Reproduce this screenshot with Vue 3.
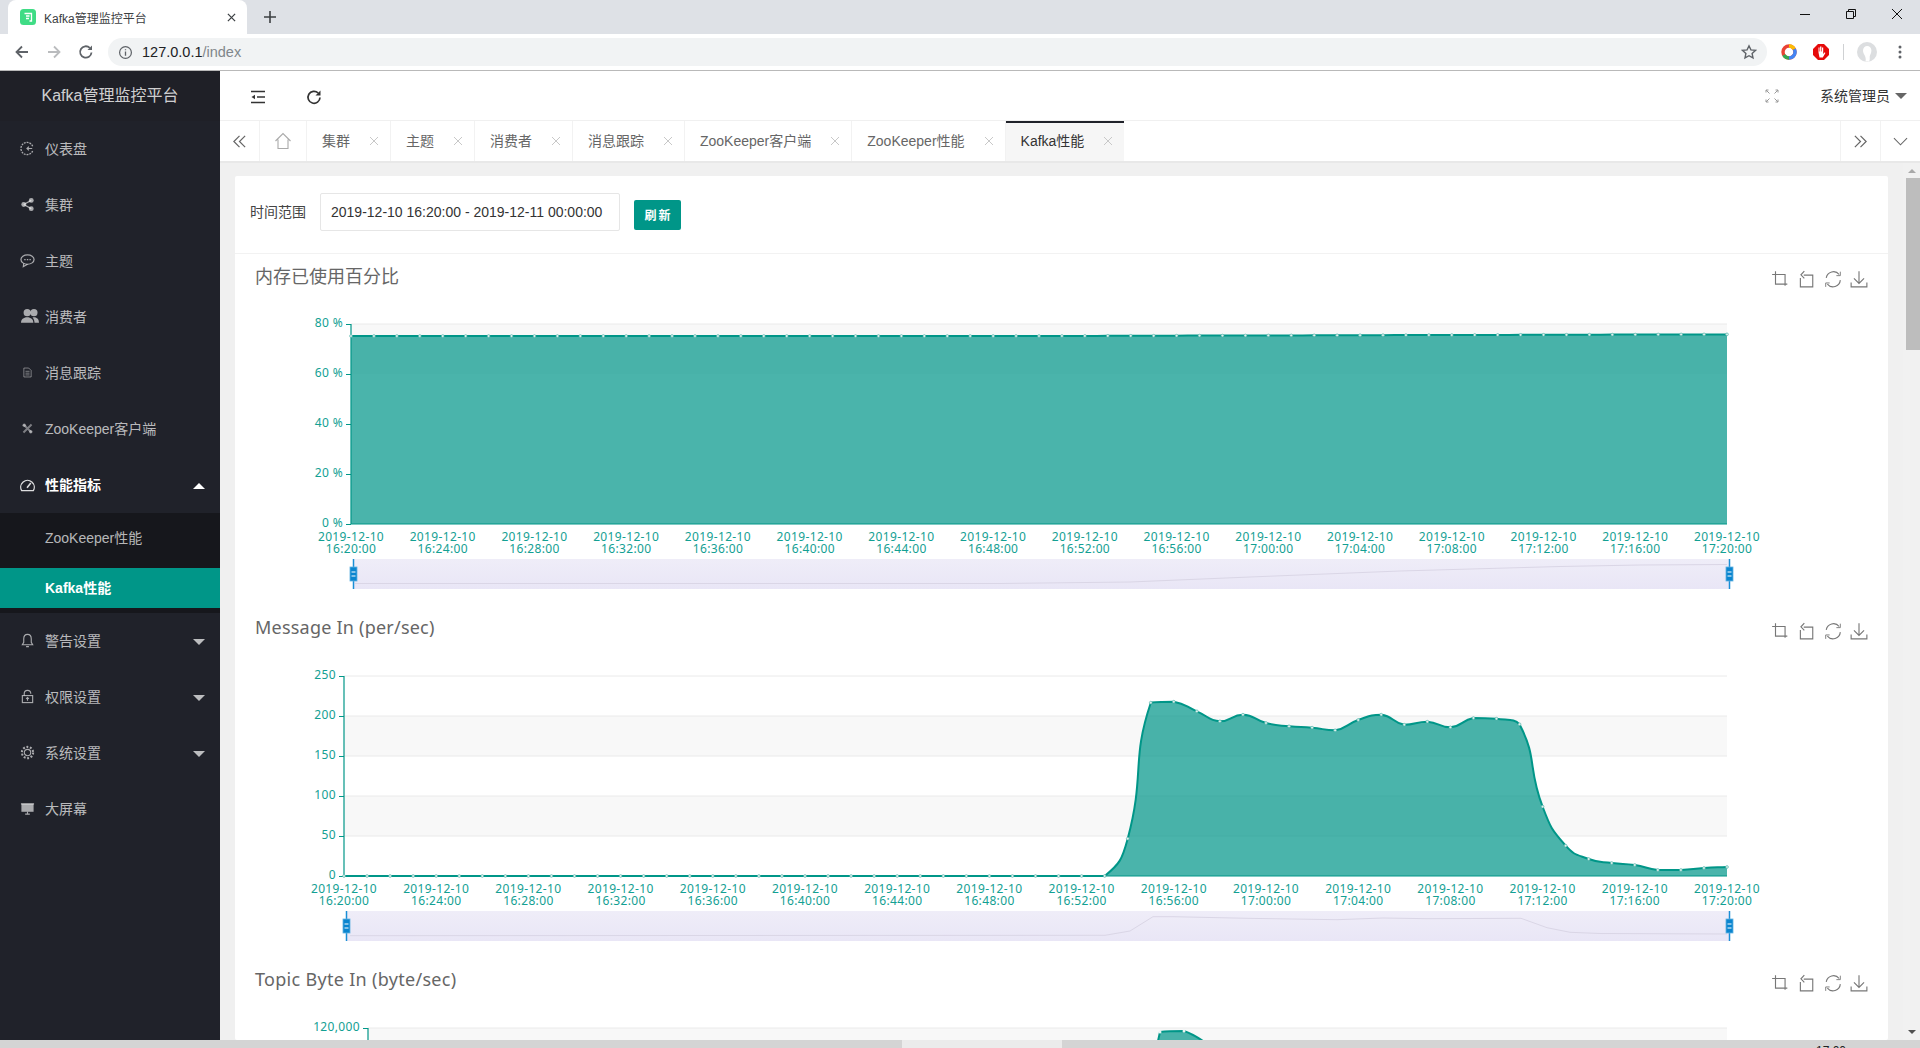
<script setup>
const menu = [
  { label: '仪表盘', icon: '<path d="M13.5 5.5A6.5 6.5 0 1 0 13.5 10.5" fill="none" stroke="currentColor" stroke-width="1.4" stroke-dasharray="2 1"/><path d="M13 8H7.5M9.5 6L7.5 8l2 2" fill="none" stroke="currentColor" stroke-width="1.3"/>' },
  { label: '集群', icon: '<circle cx="4" cy="8" r="2.6" fill="currentColor"/><circle cx="12" cy="3.6" r="2.6" fill="currentColor"/><circle cx="12" cy="12.4" r="2.6" fill="currentColor"/><path d="M4 8l8-4.4M4 8l8 4.4" stroke="currentColor" stroke-width="1.3"/>' },
  { label: '主题', icon: '<ellipse cx="8" cy="7" rx="7" ry="5" fill="none" stroke="currentColor" stroke-width="1.3"/><path d="M4 11l-.5 3.500L8 12" fill="none" stroke="currentColor" stroke-width="1.200"/><path d="M4.500 7h7" stroke="currentColor" stroke-width="1.400" stroke-dasharray="1.500 1.300"/>' },
  { label: '消费者', icon: '<circle cx="5.500" cy="5" r="3.200" fill="currentColor"/><circle cx="11.500" cy="5" r="3.200" fill="currentColor"/><path d="M0 14c0-3 2.200-5 5.500-5S11 11 11 14zM12 14c0-2-.7-3.700-1.800-4.700.4-.2.900-.3 1.400-.3 2.800 0 4.400 2 4.400 5z" fill="currentColor"/>', big: true },
  { label: '消息跟踪', icon: '<path d="M3.500 2.500h6l3 3v8h-9zM5.500 6.500h5M5.500 8.800h5M5.500 11h5" fill="none" stroke="currentColor" stroke-width="1.200"/>', dim: true },
  { label: 'ZooKeeper客户端', icon: '<path d="M3 3l10 10M13 3L3 13" stroke="currentColor" stroke-width="2.400"/><circle cx="4" cy="4" r="2.200" fill="currentColor"/><circle cx="12" cy="12" r="2.200" fill="currentColor"/>', dim: true },
  { label: '性能指标', active: true, open: true, icon: '<path d="M1.800 14.500A7.200 7.200 0 1 1 14.200 14.500z" fill="none" stroke="currentColor" stroke-width="1.400"/><path d="M7.500 11.500L11.500 6.500" stroke="currentColor" stroke-width="1.700"/>', arrow: 'up' },
  { label: '警告设置', icon: '<path d="M8 1.500c-2.800 0-4 2.200-4 4.500v4L2.500 12.500h11L12 10V6c0-2.300-1.200-4.500-4-4.500zM6.500 14.500h3" fill="none" stroke="currentColor" stroke-width="1.200"/>', arrow: 'down' },
  { label: '权限设置', icon: '<rect x="2.500" y="7" width="11" height="7.500" fill="none" stroke="currentColor" stroke-width="1.200"/><path d="M4.500 7V5a3.500 3.500 0 0 1 7 0M8 9v3.500M6.500 10.500L8 9l1.500 1.500" fill="none" stroke="currentColor" stroke-width="1.200"/>', arrow: 'down' },
  { label: '系统设置', icon: '<circle cx="8" cy="8" r="3.400" fill="none" stroke="currentColor" stroke-width="1.200"/><circle cx="8" cy="8" r="6" fill="none" stroke="currentColor" stroke-width="2.200" stroke-dasharray="2 1.770"/>', arrow: 'down' },
  { label: '大屏幕', icon: '<rect x="1.500" y="3" width="13" height="8.500" fill="currentColor"/><path d="M1 3h14M8 11.500v2.500M5.500 14h5" stroke="currentColor" stroke-width="1.200"/>' },
]
const subItems = [
  { label: 'ZooKeeper性能' },
  { label: 'Kafka性能', active: true },
]
const tabs = [
  { label: '集群' }, { label: '主题' }, { label: '消费者' }, { label: '消息跟踪' },
  { label: 'ZooKeeper客户端' }, { label: 'ZooKeeper性能' }, { label: 'Kafka性能', active: true },
]

const clamp = (v, a, b) => Math.min(Math.max(v, Math.min(a, b)), Math.max(a, b))

function smooth(pts) {
  let d = `M${pts[0][0]} ${pts[0][1]}`
  const cp = (i) => {
    const p = pts[i], a = pts[Math.max(i - 1, 0)], b = pts[Math.min(i + 1, pts.length - 1)]
    const d0 = Math.hypot(p[0] - a[0], p[1] - a[1]), d1 = Math.hypot(b[0] - p[0], b[1] - p[1])
    const r = d0 + d1 ? d0 / (d0 + d1) : 0.5
    const vx = (b[0] - a[0]) * 0.5, vy = (b[1] - a[1]) * 0.5
    return [[p[0] - vx * r, p[1] - vy * r], [p[0] + vx * (1 - r), p[1] + vy * (1 - r)]]
  }
  for (let i = 1; i < pts.length; i++) {
    const c1 = cp(i - 1)[1], c2 = cp(i)[0], p = pts[i], q = pts[i - 1]
    const y1 = clamp(c1[1], q[1], p[1]), y2 = clamp(c2[1], q[1], p[1])
    d += `C${c1[0].toFixed(1)} ${y1.toFixed(1)} ${c2[0].toFixed(1)} ${y2.toFixed(1)} ${p[0].toFixed(1)} ${p[1].toFixed(1)}`
  }
  return d
}

const times = ['16:20:00','16:24:00','16:28:00','16:32:00','16:36:00','16:40:00','16:44:00','16:48:00','16:52:00','16:56:00','17:00:00','17:04:00','17:08:00','17:12:00','17:16:00','17:20:00']

function series(x0, x1, ys) {
  const step = (x1 - x0) / 60
  return ys.map((y, i) => [x0 + step * i, y])
}

const ys1 = Array.from({ length: 61 }, (_, i) => (i < 30 ? 336 : 336 - (i - 30) * 0.055))
const ys2 = [
  ...Array(34).fill(876),
  838.7, 702.7, 701.7, 711.3, 721.3, 714.7, 723, 726.3, 727.7, 730.3, 720, 714.7, 724.7, 721.7, 727.3, 718, 718.7, 724.3,
  806.7, 845.7, 859, 863, 865, 870, 870, 868, 867,
]
const pts1 = series(351, 1727, ys1)
const pts2 = series(344, 1727, ys2)
const line1 = smooth(pts1)
const line2 = smooth(pts2)

const toPoints = (a) => a.map((p) => p.join(',')).join(' ')
const charts = [
  {
    title: '内存已使用百分比', viewBox: '235 300 1653 306', cls: 'sec1',
    x0: 351, x1: 1727, top: 324, bottom: 524,
    bands: [[324, 50]],
    grid: [324],
    yLabels: [[80, ' %'], [60, ' %'], [40, ' %'], [20, ' %'], [0, ' %']].map((v, i) => ({ t: v[0] + v[1], y: 324 + i * 50 })),
    line: line1, area: line1 + 'L1727 524L351 524Z', pts: pts1,
    lab1: 541, lab2: 553,
    dz: { y: 559, h: 30, x0: 353, x1: 1729, hy: 574 },
    mini: toPoints([[355, 583.5], [1000, 583.5], [1130, 582], [1250, 577], [1400, 571], [1560, 566.5], [1640, 565], [1727, 564.5]]),
  },
  {
    title: 'Message In (per/sec)', viewBox: '235 652 1653 305', cls: 'sec2',
    x0: 344, x1: 1727, top: 676, bottom: 876,
    bands: [[716, 40], [796, 40]],
    grid: [676, 716, 756, 796, 836],
    yLabels: ['250', '200', '150', '100', '50', '0'].map((t, i) => ({ t, y: 676 + i * 40 })),
    line: line2, area: line2 + 'L1727 876L344 876Z', pts: pts2,
    lab1: 893, lab2: 905,
    dz: { y: 911, h: 30, x0: 346, x1: 1729, hy: 926 },
    mini: toPoints([[350, 935.7], [1105, 935.3], [1130, 931], [1153, 916.7], [1173, 916.7], [1247, 918.3], [1337, 919.7], [1383, 918], [1427, 918.7], [1521, 918.3], [1547, 927.7], [1570, 932.3], [1600, 933.5], [1727, 934]]),
  },
]
const chart3Title = 'Topic Byte In (byte/sec)'
const toolIcons = [
  '<path d="M4 1v11.500h10.500M1 4h11.500v10" fill="none" stroke="currentColor"/>',
  '<path d="M6 4.500h8V15H3V7" fill="none" stroke="currentColor"/><path d="M6.500 1L3.500 4.300l3 3.200" fill="none" stroke="currentColor"/>',
  '<path d="M2 7a6.500 6.500 0 0 1 11.500-3M14.500 9a6.500 6.500 0 0 1-11.500 3.500" fill="none" stroke="currentColor"/><path d="M14.500 1.500v3.500H11M1.500 15v-3.500H5" fill="none" stroke="currentColor" stroke-width=".8"/>',
  '<path d="M8 1v10.500M3.500 7.500L8 12l4.500-4.500M1 11v4h14v-4" fill="none" stroke="currentColor"/>',
]
</script>

<template>
  <div class="page">
    <div class="strip">
      <div class="ctab">
        <svg class="favicon" viewBox="0 0 16 16"><rect width="16" height="16" rx="3.500" fill="#3fdc85"/><path d="M4.500 4.500h7v7.500h-2M6 7h3.500M6 9.500h3" fill="none" stroke="#fff" stroke-width="1.300"/></svg>
        <span class="ctitle">Kafka管理监控平台</span>
        <svg class="cx" viewBox="0 0 10 10"><path d="M1 1l8 8M9 1l-8 8" stroke="#3c4043" stroke-width="1.400"/></svg>
      </div>
      <svg class="cplus" viewBox="0 0 12 12"><path d="M6 0v12M0 6h12" stroke="#3c4043" stroke-width="1.600"/></svg>
      <div class="win">
        <svg viewBox="0 0 12 12"><path d="M1 6.500h10" stroke="#111" stroke-width="1"/></svg>
        <svg viewBox="0 0 12 12"><path d="M1.500 3.500h7v7h-7zM3.500 3.500v-2h7v7h-2" fill="none" stroke="#111" stroke-width="1"/></svg>
        <svg viewBox="0 0 12 12"><path d="M1 1l10 10M11 1L1 11" stroke="#111" stroke-width="1"/></svg>
      </div>
    </div>
    <div class="toolbar">
      <svg class="navi" viewBox="0 0 16 16"><path d="M14 8H2.500M8 2.500L2.500 8 8 13.500" fill="none" stroke="#5f6368" stroke-width="1.800"/></svg>
      <svg class="navi" viewBox="0 0 16 16"><path d="M2 8h11.500M8 2.500L13.500 8 8 13.500" fill="none" stroke="#babcbe" stroke-width="1.800"/></svg>
      <svg class="navi" viewBox="0 0 16 16"><path d="M13.500 8.500A5.700 5.700 0 1 1 11.800 3.900" fill="none" stroke="#5f6368" stroke-width="1.800"/><path d="M14 1.500V6H9.500z" fill="#5f6368"/></svg>
      <div class="omni">
        <svg class="info" viewBox="0 0 16 16"><circle cx="8" cy="8" r="6.300" fill="none" stroke="#5f6368" stroke-width="1.300"/><path d="M8 7v4.500M8 4.500v1.200" stroke="#5f6368" stroke-width="1.400"/></svg>
        <span class="url"><span class="host">127.0.0.1</span>/index</span>
        <svg class="star" viewBox="0 0 16 16"><path d="M8 1.800l1.900 4.100 4.500.5-3.300 3 .9 4.500L8 11.700l-4 2.200.9-4.500-3.300-3 4.500-.5z" fill="none" stroke="#5f6368" stroke-width="1.400"/></svg>
      </div>
      <div class="exts">
        <svg class="ext" viewBox="0 0 16 16"><circle cx="8" cy="8" r="6" fill="none" stroke="#ea4335" stroke-width="3.400"/><path d="M13.200 5A6 6 0 0 1 8 14" fill="none" stroke="#4285f4" stroke-width="3.400"/><path d="M8 14A6 6 0 0 1 2.800 11" fill="none" stroke="#34a853" stroke-width="3.400"/><path d="M8 2a6 6 0 0 1 5.200 3" fill="none" stroke="#fbbc05" stroke-width="3.400"/></svg>
        <svg class="ext" viewBox="0 0 16 16"><path d="M5 0h6l5 5v6l-5 5H5l-5-5V5z" fill="#e60a0a"/><path d="M5.500 8.500V3.500h1v4h.6V2.500h1.300v5H9V3.500h1.200V10l1.500-1.700.7.600L9.800 13.500H6.500z" fill="#fff"/></svg>
        <span class="sep"></span>
        <svg class="avatar" viewBox="0 0 20 20"><circle cx="10" cy="10" r="10" fill="#dcdee0"/><path d="M6 8.500a4.200 4.500 0 0 1 8.400 0c0 3-1.500 4-1.700 6 0 2 .2 4-.7 5H8.500c.7-3-.2-5-1-6.500C6.800 11.800 6 10.200 6 8.500z" fill="#fff"/></svg>
        <svg class="dots" viewBox="0 0 4 16"><circle cx="2" cy="3" r="1.500" fill="#5f6368"/><circle cx="2" cy="8" r="1.500" fill="#5f6368"/><circle cx="2" cy="13" r="1.500" fill="#5f6368"/></svg>
      </div>
    </div>

    <div class="app">
      <aside class="side">
        <div class="logo">Kafka管理监控平台</div>
        <template v-for="m in menu" :key="m.label">
          <div class="item" :class="{ on: m.active }">
            <svg class="micon" :class="{ dim: m.dim, big: m.big }" viewBox="0 0 16 16" v-html="m.icon"></svg>
            <span class="mlabel">{{ m.label }}</span>
            <i v-if="m.arrow" class="marrow" :class="m.arrow"></i>
          </div>
          <div v-if="m.open" class="sub">
            <div v-for="s in subItems" :key="s.label" class="subitem" :class="{ cur: s.active }">{{ s.label }}</div>
          </div>
        </template>
      </aside>

      <main class="main">
        <header class="head">
          <svg class="hicon" viewBox="0 0 16 16"><path d="M1 2.500h14M7 8h8M1 13.500h14" stroke="#333" stroke-width="1.400"/><path d="M1.500 8L5 5.800v4.400z" fill="#333"/></svg>
          <svg class="hicon refresh" viewBox="0 0 16 16"><path d="M14 8.500A6 6 0 1 1 12.200 4" fill="none" stroke="#333" stroke-width="1.700"/><path d="M14.500 1.500V6.500H9.500z" fill="#333"/></svg>
          <span class="grow"></span>
          <svg class="full" viewBox="0 0 14 14"><path d="M1 3.500V1h2.500M1 1l3.500 3.500M13 3.500V1h-2.500M13 1L9.500 4.500M1 10.500V13h2.500M1 13l3.500-3.500M13 10.500V13h-2.500M13 13L9.500 9.500" fill="none" stroke="#999" stroke-width="1"/></svg>
          <span class="user">系统管理员</span>
          <i class="ucaret"></i>
        </header>

        <nav class="tabbar">
          <div class="tside left"><svg viewBox="0 0 16 16"><path d="M8 2L2 8l6 6M14 2L8 8l6 6" fill="none" stroke="#666" stroke-width="1.300"/></svg></div>
          <div class="thome"><svg viewBox="0 0 18 18"><path d="M1.500 9L9 1.500 16.500 9M4 7.500V16.500h10V7.500" fill="none" stroke="#aaa" stroke-width="1.100"/></svg></div>
          <div v-for="t in tabs" :key="t.label" class="tab" :class="{ act: t.active }">
            <span>{{ t.label }}</span>
            <svg class="tx" viewBox="0 0 10 10"><path d="M1 1l8 8M9 1l-8 8" stroke="#c8c8c8" stroke-width="1"/></svg>
          </div>
          <span class="grow"></span>
          <div class="tside rightb"><svg viewBox="0 0 16 16"><path d="M2 2l6 6-6 6M8 2l6 6-6 6" fill="none" stroke="#666" stroke-width="1.300"/></svg></div>
          <div class="tside last"><svg viewBox="0 0 16 16"><path d="M1 4.500l7 7 7-7" fill="none" stroke="#666" stroke-width="1.100"/></svg></div>
        </nav>

        <div class="body">
          <div class="scrollarea">
            <div class="card">
              <div class="filter">
                <label class="flabel">时间范围</label>
                <div class="finput">2019-12-10 16:20:00 - 2019-12-11 00:00:00</div>
                <button class="fbtn">刷新</button>
              </div>

              <section v-for="c in charts" :key="c.title" class="chart" :class="c.cls">
                <div class="ctop">
                  <h3>{{ c.title }}</h3>
                  <div class="tools"><svg v-for="(ic, i) in toolIcons" :key="i" viewBox="0 0 16 16" v-html="ic"></svg></div>
                </div>
                <svg class="plot" :viewBox="c.viewBox">
                  <rect v-for="b in c.bands" :key="b[0]" :x="c.x0" :y="b[0]" :width="c.x1 - c.x0" :height="b[1]" fill="#f8f8f8" />
                  <line v-for="g in c.grid" :key="g" :x1="c.x0" :x2="c.x1" :y1="g" :y2="g" stroke="#eaeaea" />
                  <path :d="c.area" fill="#009688" fill-opacity=".71" />
                  <path :d="c.line" fill="none" stroke="#009688" stroke-width="2" />
                  <line :x1="c.x0" :x2="c.x0" :y1="c.top" :y2="c.bottom" stroke="#009688" stroke-width="1.200" />
                  <line :x1="c.x0" :x2="c.x1" :y1="c.bottom" :y2="c.bottom" stroke="#009688" stroke-width="1.200" />
                  <template v-for="l in c.yLabels" :key="l.t">
                    <line :x1="c.x0 - 5" :x2="c.x0" :y1="l.y + .5" :y2="l.y + .5" stroke="#009688" />
                    <text :x="c.x0 - 8" :y="l.y + 3" text-anchor="end" class="axis">{{ l.t }}</text>
                  </template>
                  <circle v-for="(p, i) in c.pts" :key="i" :cx="p[0]" :cy="p[1]" r="1.400" fill="#dff1ee" stroke="#4cb0a6" stroke-width=".6" />
                  <g v-for="(t, i) in times" :key="t">
                    <text :x="c.x0 + (c.x1 - c.x0) / 15 * i" :y="c.lab1" text-anchor="middle" class="axis">2019-12-10</text>
                    <text :x="c.x0 + (c.x1 - c.x0) / 15 * i" :y="c.lab2" text-anchor="middle" class="axis">{{ t }}</text>
                  </g>
                  <defs>
                    <linearGradient :id="'dz' + c.cls" x1="0" y1="0" x2="0" y2="1"><stop offset="0" stop-color="#efedf8" /><stop offset="1" stop-color="#e9e6f6" /></linearGradient>
                  </defs>
                  <rect :x="c.dz.x0" :y="c.dz.y" :width="c.dz.x1 - c.dz.x0" :height="c.dz.h" :fill="'url(#dz' + c.cls + ')'" />
                  <polyline :points="c.mini" fill="none" stroke="#dad6e6" stroke-width="1" />
                  <g v-for="hx in [c.dz.x0, c.dz.x1]" :key="hx">
                    <line :x1="hx + .5" :x2="hx + .5" :y1="c.dz.y" :y2="c.dz.y + c.dz.h" stroke="#1a8fd6" stroke-width="1.500" />
                    <rect :x="hx - 3" :y="c.dz.hy - 7" width="7" height="14" fill="#0a85cf" stroke="#62b2e2" stroke-width=".8" />
                    <path :d="`M${hx - 1.5} ${c.dz.hy - 2}h4M${hx - 1.5} ${c.dz.hy + 2}h4`" stroke="#fff" stroke-width="1" />
                  </g>
                </svg>
              </section>

              <section class="chart sec3">
                <div class="ctop">
                  <h3>{{ chart3Title }}</h3>
                  <div class="tools"><svg v-for="(ic, i) in toolIcons" :key="i" viewBox="0 0 16 16" v-html="ic"></svg></div>
                </div>
                <svg class="plot p3" viewBox="235 1003 1653 37">
                  <rect x="368" y="1028" width="1359" height="20" fill="#f8f8f8" />
                  <line x1="368" x2="1727" y1="1028" y2="1028" stroke="#eaeaea" />
                  <line x1="368" x2="368" y1="1028" y2="1040" stroke="#009688" stroke-width="1.200" />
                  <line x1="363" x2="368" y1="1028.500" y2="1028.500" stroke="#009688" />
                  <text x="360" y="1031" text-anchor="end" class="axis">120,000</text>
                  <path d="M1158 1041L1160 1032C1168 1031 1176 1031 1184 1031L1203 1041Z" fill="#009688" fill-opacity=".71" />
                  <path d="M1158 1041L1160 1032C1168 1031 1176 1031 1184 1031C1190 1033 1197 1037 1203 1041" fill="none" stroke="#009688" stroke-width="2" />
                  <circle cx="1160" cy="1032" r="1.500" fill="#e8f5f3" />
                  <circle cx="1184" cy="1031" r="1.500" fill="#e8f5f3" />
                </svg>
              </section>
            </div>
          </div>
          <div class="sbar">
            <i class="sup"></i>
            <div class="sthumb"></div>
            <i class="sdown"></i>
          </div>
        </div>
      </main>
    </div>
    <div class="taskbar"><span class="tblight"></span><span class="clock">17:00</span></div>
  </div>
</template>

<style>
html, body { margin: 0; padding: 0; overflow: hidden; }
</style>

<style scoped>
.page { width: 1920px; height: 1048px; display: flex; flex-direction: column; overflow: hidden; font-family: "Liberation Sans", "Noto Sans CJK SC", sans-serif; font-size: 14px; color: #333; background: #fff; }
.grow { flex: 1; }

.strip { height: 34px; background: #dee1e6; display: flex; align-items: flex-end; flex: none; position: relative; }
.ctab { width: 239px; height: 34px; margin-left: 8px; background: #fff; border-radius: 8px 8px 0 0; display: flex; align-items: center; box-sizing: border-box; padding-left: 12px; }
.favicon { width: 16px; height: 16px; }
.ctitle { margin-left: 8px; font-size: 12px; color: #3c4043; width: 180px; }
.cx { width: 9px; height: 9px; margin-left: 3px; }
.cplus { width: 12px; height: 12px; margin: 0 0 11px 17px; }
.win { margin-left: auto; display: flex; align-self: flex-start; padding: 8px 17px 0 0; gap: 34px; }
.win svg { width: 12px; height: 12px; }

.toolbar { height: 36px; border-bottom: 1px solid #b9b9b9; flex: none; display: flex; align-items: center; padding-left: 14px; background: #fff; box-sizing: content-box; }
.navi { width: 16px; height: 16px; margin-right: 16px; }
.omni { width: 1659px; height: 28px; margin-left: -2px; background: #f1f3f4; border-radius: 14px; display: flex; align-items: center; padding: 0 10px 0 10px; box-sizing: border-box; }
.info { width: 15px; height: 15px; }
.url { margin-left: 9px; font-size: 14.5px; color: #80868b; }
.host { color: #202124; }
.star { width: 16px; height: 16px; margin-left: auto; }
.exts { display: flex; align-items: center; margin-left: 14px; }
.ext { width: 16px; height: 16px; margin-right: 16px; }
.sep { width: 1px; height: 16px; background: #cfd1d3; margin-right: 13px; margin-left: -2px; }
.avatar { width: 20px; height: 20px; margin-right: 21px; }
.dots { width: 4px; height: 16px; }

.app { flex: 1; display: flex; min-height: 0; }
.side { width: 220px; flex: none; background: #20222a; color: rgba(255, 255, 255, .7); }
.logo { height: 50px; line-height: 50px; text-align: center; font-size: 16px; color: rgba(255, 255, 255, .8); background: #1f2027; }
.item { height: 56px; display: flex; align-items: center; padding: 0 0 2px 19px; box-sizing: border-box; position: relative; }
.item.on { color: #fff; font-weight: 700; }
.micon { width: 15px; height: 15px; margin-right: 10px; margin-left: 1px; color: rgba(255, 255, 255, .62); flex: none; }
.micon.dim { color: rgba(255, 255, 255, .42); width: 13px; height: 13px; margin-left: 2px; margin-right: 11px; }
.micon.big { width: 18px; height: 18px; margin-left: 2px; margin-right: 6px; }
.item.on .micon { color: rgba(255, 255, 255, .85); }
.marrow { position: absolute; right: 15px; top: 26px; border: 6px solid transparent; border-bottom: 0; border-top-color: rgba(255, 255, 255, .7); }
.marrow.up { border-top: 0; border-bottom: 6px solid #fff; }
.sub { background: #16171c; padding: 5px 0; display: flex; flex-direction: column; gap: 10px; }
.subitem { height: 40px; line-height: 40px; padding-left: 45px; }
.subitem.cur { background: #009688; color: #fff; font-weight: 700; }

.main { flex: 1; min-width: 0; display: flex; flex-direction: column; }
.head { height: 49px; flex: none; border-bottom: 1px solid #f0f0f0; display: flex; align-items: center; padding-left: 30px; padding-right: 13px; background: #fff; }
.hicon { width: 16px; height: 16px; margin-top: 2px; }
.refresh { margin-left: 40px; }
.full { width: 14px; height: 14px; margin-right: 41px; }
.user { font-size: 14px; color: #333; margin-top: -2px; }
.ucaret { margin-left: 5px; border: 6px solid transparent; border-bottom: 0; border-top-color: #666; }

.tabbar { height: 40px; flex: none; display: flex; background: #fff; border-bottom: 2px solid #e8e8e8; box-sizing: content-box; }
.tside { width: 40px; display: flex; align-items: center; justify-content: center; border-right: 1px solid #f2f2f2; box-sizing: border-box; }
.tside svg { width: 15px; height: 15px; }
.rightb { border-left: 1px solid #f2f2f2; border-right: 1px solid #f2f2f2; width: 41px; }
.last { border: 0; width: 39px; }
.thome { width: 47px; display: flex; align-items: center; justify-content: center; border-right: 1px solid #f2f2f2; box-sizing: border-box; }
.thome svg { width: 18px; height: 18px; }
.tab { display: flex; align-items: center; padding: 0 11px 2px 15px; color: #666; border-right: 1px solid #f2f2f2; box-sizing: border-box; gap: 19px; white-space: nowrap; position: relative; }
.tab.act { background: #f6f6f6; color: #333; border-right: 0; }
.tab.act::before { content: ""; position: absolute; left: 0; right: 0; top: 0; height: 2px; background: #20222a; }
.tx { width: 10px; height: 10px; margin-top: 2px; }

.body { flex: 1; min-height: 0; display: flex; background: #f0f0f0; }
.scrollarea { flex: 1; min-width: 0; overflow: hidden; padding: 13px 15px 0; }
.card { width: 1653px; background: #fff; border-radius: 2px; }
.filter { height: 60px; padding: 17px 0 0 15px; border-bottom: 1px solid #f2f2f2; display: flex; align-items: flex-start; box-sizing: content-box; }
.flabel { font-size: 14px; width: 56px; color: #444; line-height: 38px; }
.finput { width: 300px; height: 38px; margin-left: 14px; border: 1px solid #e6e6e6; border-radius: 2px; box-sizing: border-box; line-height: 36px; padding-left: 10px; font-size: 14px; color: #333; }
.fbtn { width: 47px; height: 30px; margin: 7px 0 0 14px; background: #009688; color: #fff; border: 0; border-radius: 2px; font-size: 12px; letter-spacing: 2px; font-family: inherit; font-weight: 700; padding: 0 0 2px 2px; }

.chart { display: flex; flex-direction: column; }
.sec1 { height: 352px; }
.sec2 { height: 351px; }
.sec3 { height: 83px; }
.ctop { height: 46px; flex: none; display: flex; align-items: center; justify-content: space-between; padding: 0 20px 0 20px; }
.ctop h3 { margin: -4px 0 0; font-family: "Noto Sans", "Noto Sans CJK SC", sans-serif; font-size: 18px; font-weight: 400; color: #666; letter-spacing: .22px; }
.sec1 .ctop h3 { letter-spacing: 0; }
.sec3 .ctop h3 { margin-top: -2px; letter-spacing: .3px; }
.tools { display: flex; gap: 8.5px; margin-top: 4px; color: #777; }
.sec3 .tools { margin-top: 6px; }
.tools svg { width: 18px; height: 18px; }
.plot { width: 1653px; height: 306px; display: block; }
.sec2 .plot { height: 305px; }
.plot.p3 { height: 37px; }
.axis { font-family: "Noto Sans", sans-serif; font-size: 12px; fill: #13a093; letter-spacing: .35px; }

.sbar { width: 17px; flex: none; position: relative; padding-top: 15px; box-sizing: border-box; background: #f1f1f1; }
.sthumb { width: 14px; height: 172px; margin-left: 3px; background: #bdbdbd; }
.sup { position: absolute; top: 6px; left: 5px; border: 4px solid transparent; border-top: 0; border-bottom: 4px solid #a9a9a9; }
.sdown { position: absolute; bottom: 6px; left: 5px; border: 4px solid transparent; border-bottom: 0; border-top: 4px solid #505050; }

.taskbar { height: 8px; flex: none; background: #d4d4d4; position: relative; overflow: hidden; }
.tblight { position: absolute; left: 902px; width: 160px; top: 0; bottom: 0; background: #ebebeb; }
.clock { position: absolute; left: 1816px; top: 4px; font-size: 12px; line-height: 14px; color: #222; }
</style>
